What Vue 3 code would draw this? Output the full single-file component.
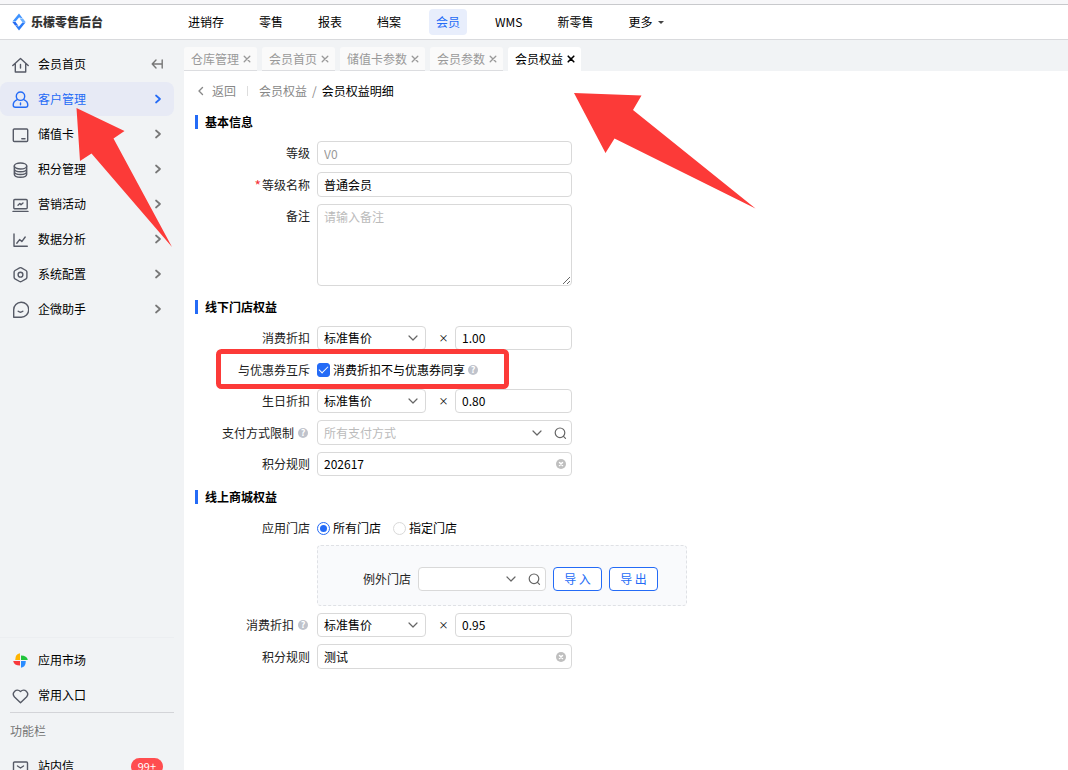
<script setup>
import { ref } from 'vue'

const nav = ['进销存', '零售', '报表', '档案', '会员', 'WMS', '新零售']
const tabs = ['仓库管理', '会员首页', '储值卡参数', '会员参数', '会员权益']
const menu = [
  { name: '会员首页', icon: 'home' },
  { name: '客户管理', icon: 'user' },
  { name: '储值卡', icon: 'card' },
  { name: '积分管理', icon: 'coins' },
  { name: '营销活动', icon: 'promo' },
  { name: '数据分析', icon: 'chart' },
  { name: '系统配置', icon: 'config' },
  { name: '企微助手', icon: 'chat' }
]
const priceTypes = ['标准售价']

const levelName = ref('普通会员')
const remark = ref('')
const exclusive = ref(true)
const discount = ref('1.00')
const birthday = ref('0.80')
const offlineRule = ref('202617')
const storeScope = ref('all')
const mallDiscount = ref('0.95')
const mallRule = ref('测试')
</script>

<template>
  <div class="page">
    <header class="header">
      <a class="brand" href="#">
        <svg width="14" height="18" viewBox="0 0 14 18">
          <path d="M7 0.5 L10.6 5.2 L7 4.6 L3.6 8.6 H0.4 Z" fill="#3f93ff" />
          <path d="M10.9 5.6 L13.6 9 L13.4 9.2 H10.4 L7.6 5.4 Z" fill="#6ab0ff" />
          <path d="M7 17.5 L3.4 12.8 L7 13.4 L10.4 9.6 H13.5 Z" fill="#2b7cf8" />
          <path d="M3.1 12.4 L0.4 9 H3.6 L6.4 12.7 Z" fill="#2369f2" />
        </svg>
        <span>乐檬零售后台</span>
      </a>
      <nav class="topnav">
        <a v-for="n in nav" :key="n" href="#" :class="{ on: n === '会员' }">{{ n }}</a>
        <a href="#" class="more">更多<i class="caret"></i></a>
      </nav>
    </header>

    <div class="body">
      <aside class="sidebar">
        <nav class="menu">
          <a v-for="m in menu" :key="m.name" href="#" class="item" :class="{ on: m.icon === 'user' }">
            <svg class="ico" width="17" height="17" viewBox="0 0 17 17">
              <template v-if="m.icon === 'home'">
                <path d="M0.8 9.5 L8.5 2.5 L16.2 9.5 M3.3 8 V16 H13.7 V8 M8.5 8.5 V12" />
              </template>
              <template v-else-if="m.icon === 'user'">
                <circle cx="8.5" cy="5.2" r="4.2" />
                <path d="M5.7 8.4 C2.5 9.7 1.2 12 1.2 14 Q1.2 16.3 3.4 16.3 H13.6 Q15.8 16.3 15.8 14 C15.8 12 14.5 9.7 11.3 8.4 M8.5 12 V13.8" />
              </template>
              <template v-else-if="m.icon === 'card'">
                <rect x="1.3" y="3" width="14.4" height="12.5" rx="1" />
                <path d="M9.8 12.8 H13" />
              </template>
              <template v-else-if="m.icon === 'coins'">
                <ellipse cx="8.5" cy="5" rx="6.2" ry="3" />
                <path d="M2.3 5 V13.2 C2.3 17.2 14.7 17.2 14.7 13.2 V5 M2.3 7.8 C2.3 11.8 14.7 11.8 14.7 7.8 M2.3 10.5 C2.3 14.5 14.7 14.5 14.7 10.5" />
              </template>
              <template v-else-if="m.icon === 'promo'">
                <rect x="1.8" y="3.5" width="13.4" height="9.3" rx="1" />
                <path d="M1 15.4 H16 M6 9.2 L7.8 7.4 L9 8.8 L11 7" />
              </template>
              <template v-else-if="m.icon === 'chart'">
                <path d="M2 3 V15.3 H15.3 M4.8 12.2 L7.6 8.6 L9.8 10.6 L13.2 6" />
              </template>
              <template v-else-if="m.icon === 'config'">
                <path d="M7.6 1.9 Q8.5 1.4 9.4 1.9 L14 4.5 Q14.9 5.1 14.9 6.1 V11.3 Q14.9 12.3 14 12.9 L9.4 15.5 Q8.5 16 7.6 15.5 L3 12.9 Q2.1 12.3 2.1 11.3 V6.1 Q2.1 5.1 3 4.5 Z" />
                <circle cx="8.5" cy="8.7" r="2.4" />
              </template>
              <template v-else>
                <path d="M1.7 16.2 V8.8 A7.5 7.5 0 1 1 9.2 16.2 Z M6.2 10.3 Q8.5 12.2 10.8 10.3" />
              </template>
            </svg>
            <span class="label">{{ m.name }}</span>
            <svg v-if="m.icon === 'home'" class="fold" width="12" height="12" viewBox="0 0 12 12">
              <path d="M5 2 L1.2 6 L5 10 M1.2 6 H11 M11.2 2 V10" />
            </svg>
            <svg v-else class="fold arrow" width="12" height="12" viewBox="0 0 12 12">
              <path d="M5 2.5 L9 6 L5 9.5" />
            </svg>
          </a>
        </nav>

        <div class="shortcuts">
          <a href="#" class="item">
            <svg width="17" height="17" viewBox="0 0 17 17">
              <path d="M8 1.2 V8 H3.2 Q3.2 2 8 1.2 Z" fill="#ffb400" />
              <path d="M9 3.5 Q15 3.5 15.8 8 H9 Z" fill="#21c43b" />
              <path d="M9 9 H13.8 Q13.8 15 9 15.8 Z" fill="#2a8cff" />
              <path d="M8 9 V13.5 Q2 13.5 1.2 9 Z" fill="#f8383b" />
            </svg>
            <span class="label">应用市场</span>
          </a>
          <a href="#" class="item">
            <svg class="ico" width="17" height="17" viewBox="0 0 17 17">
              <path d="M8.5 15.8 L2.5 10 C-1 5.8 4.6 0.4 8.5 4.6 C12.4 0.4 18 5.8 14.5 10 Z" />
            </svg>
            <span class="label">常用入口</span>
          </a>
        </div>

        <div class="tools">
          <p>功能栏</p>
          <a href="#" class="item">
            <svg class="ico" width="17" height="17" viewBox="0 0 17 17">
              <rect x="1.5" y="4" width="14" height="12" rx="1" />
              <path d="M5.5 8 L8.5 10 L11.5 8" />
            </svg>
            <span class="label">站内信</span>
            <span class="badge">99+</span>
          </a>
        </div>
      </aside>

      <main class="main">
        <div class="tabs">
          <div v-for="t in tabs" :key="t" class="tab" :class="{ on: t === '会员权益' }">
            <a href="#">{{ t }}</a>
            <button type="button" :aria-label="'关闭' + t">
              <svg width="8" height="8" viewBox="0 0 8 8"><path d="M1.2 1.2 L6.8 6.8 M6.8 1.2 L1.2 6.8" /></svg>
            </button>
          </div>
        </div>

        <div class="content">
          <div class="crumbs">
            <a href="#" class="back">
              <svg width="10" height="10" viewBox="0 0 10 10"><path d="M7.5 1.5 L4 5 L7.5 8.5" /></svg>
              <span>返回</span>
            </a>
            <i class="bar"></i>
            <a href="#">会员权益</a>
            <span class="slash">/</span>
            <span class="here">会员权益明细</span>
          </div>

          <h2>基本信息</h2>
          <div class="form">
            <div class="row">
              <label for="level">等级</label>
              <input id="level" class="box wide" value="V0" disabled />
            </div>
            <div class="row tall">
              <label for="name"><em>*</em>等级名称</label>
              <input id="name" v-model="levelName" class="box wide" />
            </div>
            <div class="row area">
              <label for="remark">备注</label>
              <textarea id="remark" v-model="remark" class="box wide" placeholder="请输入备注"></textarea>
            </div>
          </div>

          <h2>线下门店权益</h2>
          <div class="form">
            <div class="row">
              <label for="d1">消费折扣</label>
              <span class="pick">
                <select id="d1" class="box"><option v-for="p in priceTypes" :key="p">{{ p }}</option></select>
                <svg class="down" width="10" height="10" viewBox="0 0 10 10"><path d="M1 3 L5 7 L9 3" /></svg>
              </span>
              <span class="times">×</span>
              <input v-model="discount" class="box rate" aria-label="消费折扣" />
            </div>
            <div class="row tall">
              <label for="ex">与优惠券互斥</label>
              <span class="choice">
                <input id="ex" v-model="exclusive" type="checkbox" />
                <label for="ex">消费折扣不与优惠券同享</label>
                <i class="help">?</i>
              </span>
            </div>
            <div class="row">
              <label for="d2">生日折扣</label>
              <span class="pick">
                <select id="d2" class="box"><option v-for="p in priceTypes" :key="p">{{ p }}</option></select>
                <svg class="down" width="10" height="10" viewBox="0 0 10 10"><path d="M1 3 L5 7 L9 3" /></svg>
              </span>
              <span class="times">×</span>
              <input v-model="birthday" class="box rate" aria-label="生日折扣" />
            </div>
            <div class="row tall">
              <label for="pay">支付方式限制<i class="help">?</i></label>
              <span class="box wide combo">
                <input id="pay" placeholder="所有支付方式" />
                <button type="button" aria-label="展开">
                  <svg width="10" height="10" viewBox="0 0 10 10"><path d="M1 3 L5 7 L9 3" /></svg>
                </button>
                <button type="button" aria-label="搜索">
                  <svg width="14" height="14" viewBox="0 0 14 14"><circle cx="7" cy="6.8" r="4.8" /><path d="M10.5 10.3 L12.5 12.3" /></svg>
                </button>
              </span>
            </div>
            <div class="row">
              <label for="r1">积分规则</label>
              <span class="box wide combo">
                <input id="r1" v-model="offlineRule" />
                <button type="button" class="clear" aria-label="清除">
                  <svg width="10" height="10" viewBox="0 0 10 10"><circle cx="5" cy="5" r="5" /><path d="M3.5 3.5 L6.5 6.5 M6.5 3.5 L3.5 6.5" /></svg>
                </button>
              </span>
            </div>
          </div>

          <h2>线上商城权益</h2>
          <div class="form">
            <div class="row scope">
              <label for="all">应用门店</label>
              <span class="choice">
                <input id="all" v-model="storeScope" type="radio" value="all" />
                <label for="all">所有门店</label>
              </span>
              <span class="choice second">
                <input id="some" v-model="storeScope" type="radio" value="some" />
                <label for="some">指定门店</label>
              </span>
            </div>
            <div class="row area">
              <span class="spacer"></span>
              <div class="panel">
                <label for="except">例外门店</label>
                <span class="box combo">
                  <input id="except" />
                  <button type="button" aria-label="展开">
                    <svg width="10" height="10" viewBox="0 0 10 10"><path d="M1 3 L5 7 L9 3" /></svg>
                  </button>
                  <button type="button" aria-label="搜索">
                    <svg width="14" height="14" viewBox="0 0 14 14"><circle cx="7" cy="6.8" r="4.8" /><path d="M10.5 10.3 L12.5 12.3" /></svg>
                  </button>
                </span>
                <button type="button" class="btn">导 入</button>
                <button type="button" class="btn">导 出</button>
              </div>
            </div>
            <div class="row">
              <label for="d3">消费折扣<i class="help">?</i></label>
              <span class="pick">
                <select id="d3" class="box"><option v-for="p in priceTypes" :key="p">{{ p }}</option></select>
                <svg class="down" width="10" height="10" viewBox="0 0 10 10"><path d="M1 3 L5 7 L9 3" /></svg>
              </span>
              <span class="times">×</span>
              <input v-model="mallDiscount" class="box rate" aria-label="消费折扣" />
            </div>
            <div class="row tall">
              <label for="r2">积分规则</label>
              <span class="box wide combo">
                <input id="r2" v-model="mallRule" />
                <button type="button" class="clear" aria-label="清除">
                  <svg width="10" height="10" viewBox="0 0 10 10"><circle cx="5" cy="5" r="5" /><path d="M3.5 3.5 L6.5 6.5 M6.5 3.5 L3.5 6.5" /></svg>
                </button>
              </span>
            </div>
          </div>
        </div>
      </main>
    </div>

    <svg class="marks" width="100%" height="100%">
      <path d="M76.5 108 L124.5 131 L113.5 138.5 L172 247 L91.5 153.5 L80 161 Z" />
      <path d="M574 93 L641.5 95.5 L633 110 L755.5 208.5 L614.5 138.5 L605.5 153 Z" />
      <rect x="218.5" y="351.5" width="288" height="35" rx="3" />
    </svg>
  </div>
</template>

<style>
body {
  background: #fff;
}
</style>

<style scoped>
* {
  box-sizing: border-box;
}
.page {
  position: relative;
  display: flex;
  flex-direction: column;
  height: 100vh;
  overflow: hidden;
  border-top: 4px solid #f7f7f9;
  font: 12px/18px "Noto Sans CJK SC", sans-serif;
  color: #000;
}
a {
  color: inherit;
  text-decoration: none;
}
button,
input,
select,
textarea {
  font: inherit;
  color: inherit;
  margin: 0;
}
button {
  display: flex;
  align-items: center;
  justify-content: center;
  padding: 0;
  border: 0;
  background: none;
}
svg {
  flex: none;
  fill: none;
  stroke-linecap: round;
  stroke-linejoin: round;
}
.header {
  flex: none;
  display: flex;
  align-items: center;
  height: 36px;
  border-top: 1px solid #c8c9cc;
  border-bottom: 1px solid #d9dadd;
}
.brand {
  display: flex;
  align-items: center;
  gap: 5px;
  width: 181px;
  padding-left: 12px;
  font-weight: 900;
  color: #333;
}
.topnav {
  display: flex;
  gap: 21px;
}
.topnav a {
  padding: 4px 7px;
  border-radius: 4px;
}
.topnav .on {
  background: #e8eefc;
  color: #246bf6;
}
.topnav .more {
  display: flex;
  align-items: center;
  gap: 5px;
}
.caret {
  border: 3px solid transparent;
  border-top-color: #444;
  border-bottom: 0;
}
.body {
  flex: 1;
  min-height: 0;
  display: flex;
}
.sidebar {
  flex: none;
  width: 184px;
  padding-right: 10px;
  display: grid;
  grid-template-rows: 1fr auto 58px;
  background: #f1f3f5;
}
.menu {
  display: flex;
  flex-direction: column;
  gap: 1px;
  padding-top: 7px;
}
.item {
  display: flex;
  align-items: center;
  height: 34px;
  padding: 0 11px 0 12px;
  border-radius: 8px;
}
.item .label {
  flex: 1;
  padding-left: 9px;
}
.menu .on {
  background: #e7eaf5;
  color: #246bf6;
}
.ico {
  stroke: #565a66;
  stroke-width: 1.4;
}
.fold {
  stroke: #777;
  stroke-width: 1.4;
}
.arrow {
  stroke-width: 1.7;
}
.on .ico,
.on .fold {
  stroke: #246bf6;
}
.shortcuts {
  display: flex;
  flex-direction: column;
  gap: 1px;
  padding-top: 5px;
  border-top: 1px solid #eceef1;
}
.tools {
  overflow: hidden;
  margin-left: 10px;
  border-top: 1px solid #d3d4d8;
}
.tools p {
  margin: 0;
  line-height: 36px;
  color: #777;
}
.tools .item {
  padding: 0 11px 0 2px;
}
.badge {
  height: 17px;
  padding: 0 7px;
  border-radius: 9px;
  background: #ff4d4f;
  color: #fff;
  font-size: 11px;
  line-height: 17px;
}
.main {
  flex: 1;
  min-width: 0;
}
.tabs {
  display: flex;
  gap: 5px;
  height: 31px;
  padding-top: 7px;
  background: #f1f3f5;
}
.tab {
  display: flex;
  align-items: center;
  gap: 4px;
  padding: 0 6px 0 7px;
  border-bottom: 1px solid #dcdde0;
  border-radius: 3px 3px 0 0;
  background: #fafafa;
  color: #999;
}
.tab path {
  stroke: #999;
  stroke-width: 1.3;
}
.tab.on {
  border-color: #fff;
  background: #fff;
  color: #000;
}
.tab.on path {
  stroke: #000;
  stroke-width: 1.6;
}
.content {
  padding: 11px;
}
.crumbs {
  display: flex;
  align-items: center;
  height: 18px;
  margin-bottom: 13px;
  color: #888;
}
.back {
  display: flex;
  align-items: center;
  gap: 7px;
}
.back path {
  stroke: #888;
  stroke-width: 1.4;
}
.bar {
  width: 1px;
  height: 10px;
  margin: 0 11px;
  background: #ddd;
}
.slash {
  margin: 0 5px;
}
.here {
  color: #000;
}
h2 {
  display: flex;
  align-items: center;
  gap: 7px;
  margin: 12px 0 10px;
  font-size: 12px;
  line-height: 18px;
  font-weight: 700;
}
h2::before {
  content: "";
  width: 3px;
  height: 14px;
  background: #246bf6;
}
.form {
  display: flex;
  flex-direction: column;
  gap: 7px;
}
.row {
  display: flex;
  align-items: center;
  height: 24px;
}
.row.tall {
  height: 25px;
}
.row.scope {
  height: 22px;
  padding-top: 2px;
}
.row.area {
  height: auto;
  align-items: flex-start;
}
.row > label,
.spacer {
  flex: none;
  display: flex;
  align-items: center;
  justify-content: flex-end;
  width: 115px;
  margin-right: 7px;
  color: #222;
}
.area > label {
  line-height: 24px;
}
em {
  margin-right: 1px;
  color: #f5333a;
  font-size: 14px;
  font-style: normal;
}
.box {
  height: 100%;
  padding: 0 6px;
  border: 1px solid #d9d9d9;
  border-radius: 4px;
  background: #fff;
  outline: 0;
}
.wide {
  width: 255px;
}
.box:disabled {
  color: #999;
}
textarea.box {
  display: block;
  height: 82px;
  padding: 3px 6px;
  resize: vertical;
}
::placeholder {
  color: #bbb;
  opacity: 1;
}
.pick {
  position: relative;
  width: 109px;
  height: 100%;
}
.pick select {
  appearance: none;
  width: 100%;
}
.down {
  position: absolute;
  right: 8px;
  top: 7px;
}
.down path,
.combo path,
.combo circle {
  stroke: #666;
  stroke-width: 1.2;
}
.times {
  width: 29px;
  padding-left: 6px;
  font-size: 10px;
  text-align: center;
}
.rate {
  width: 117px;
  padding-bottom: 2px;
}
.combo {
  display: flex;
  align-items: center;
  gap: 11px;
  padding: 0 4px 0 0;
}
.combo input {
  flex: 1;
  min-width: 0;
  padding: 0 0 0 6px;
  border: 0;
  outline: 0;
  background: none;
}
.combo .clear {
  margin-right: 1px;
}
.combo .clear circle {
  fill: #bfbfbf;
  stroke: none;
}
.combo .clear path {
  stroke: #fff;
  stroke-width: 1.5;
}
.choice {
  display: flex;
  align-items: center;
  gap: 3px;
}
.choice input {
  appearance: none;
  display: flex;
  align-items: center;
  justify-content: center;
  width: 13px;
  height: 13px;
  border: 1px solid #d9d9d9;
}
.choice input[type="checkbox"] {
  height: 14px;
  border-radius: 3px;
}
.choice input[type="checkbox"]:checked {
  border-color: #246bf6;
  background: #246bf6;
}
.choice input[type="checkbox"]:checked::after {
  content: "";
  width: 8px;
  height: 4px;
  margin-bottom: 3px;
  border: solid #fff;
  border-width: 0 0 1px 1px;
  transform: rotate(-45deg);
}
.choice input[type="radio"] {
  width: 13px;
  height: 13px;
  border-radius: 50%;
}
.choice input[type="radio"]:checked {
  border-color: #246bf6;
}
.choice input[type="radio"]:checked::after {
  content: "";
  width: 7px;
  height: 7px;
  border-radius: 50%;
  background: #246bf6;
}
.second {
  margin-left: 12px;
}
.help {
  width: 10px;
  height: 10px;
  border-radius: 50%;
  background: #bfc3cc;
  color: #fff;
  font-size: 9px;
  font-weight: 700;
  font-style: normal;
  line-height: 10px;
  text-align: center;
}
label > .help {
  margin: 0 2px 0 4px;
}
.panel {
  display: flex;
  align-items: center;
  justify-content: flex-end;
  gap: 7px;
  width: 370px;
  padding: 21px 28px 14px 14px;
  border: 1px dashed #dfe1e5;
  border-radius: 4px;
  background: #f9fafc;
}
.panel label {
  flex: none;
  color: #222;
}
.panel .combo {
  flex: none;
  width: 128px;
  height: 24px;
}
.btn {
  flex: none;
  width: 49px;
  height: 24px;
  border: 1px solid #246bf6;
  border-radius: 4px;
  background: #fff;
  color: #246bf6;
}
.marks {
  position: absolute;
  left: 0;
  top: -4px;
  pointer-events: none;
}
.marks path {
  fill: #fc3a38;
}
.marks rect {
  stroke: #fc3a38;
  stroke-width: 5;
}
</style>
